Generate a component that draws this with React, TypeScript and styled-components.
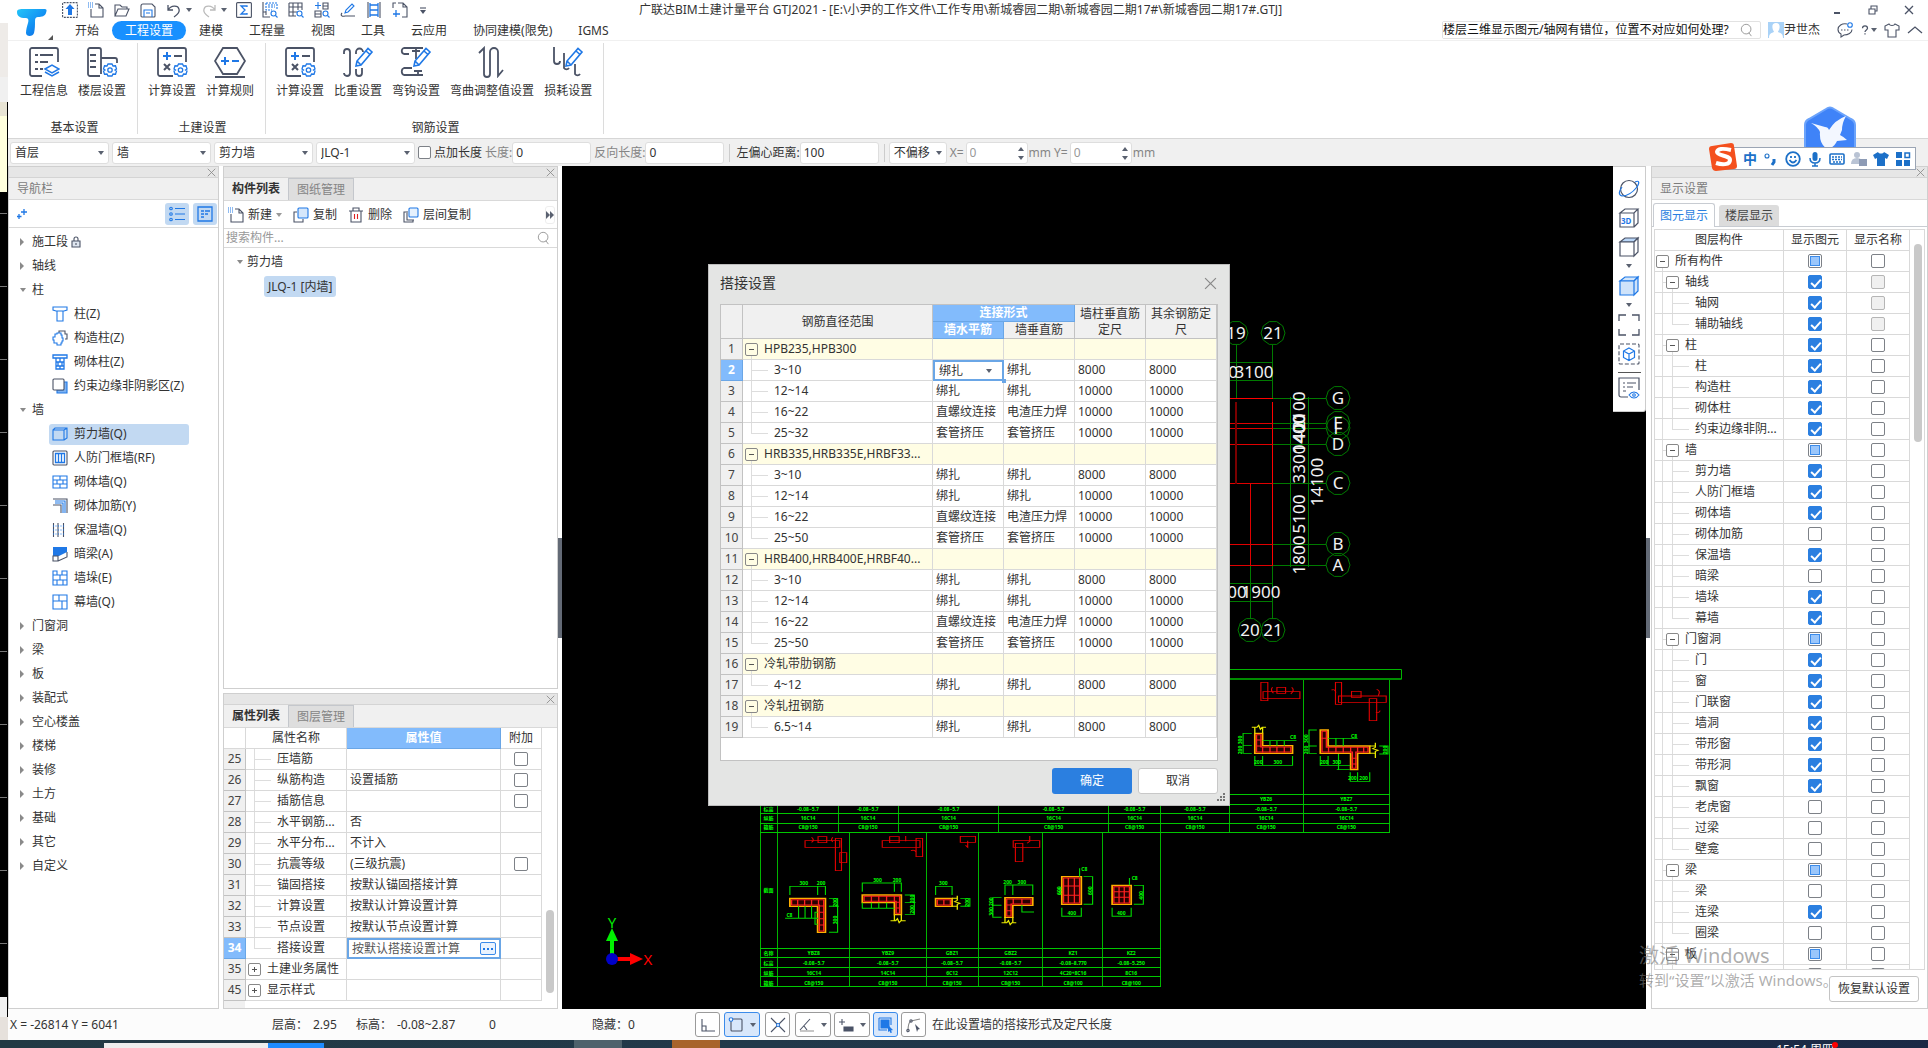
import React, { useEffect, useRef } from "react";
import styled, { createGlobalStyle, css } from "styled-components";

const INK = "#4b5366";
const BLUE = "#1f78e6";
const LINE = "#d9d9d9";

const GlobalStyle = createGlobalStyle`
  * { box-sizing: border-box; }
  html, body { margin: 0; padding: 0; height: 100%; overflow: hidden; }
  body, button, input, select {
    font-family: "Noto Sans", "Noto Sans CJK SC", sans-serif;
    font-size: 12px;
    line-height: 18px;
    color: #333;
  }
  button { margin: 0; padding: 0; border: 0; background: none; }
  svg { display: block; flex: none; }
  h1, h2, p, ul { margin: 0; padding: 0; font-weight: normal; list-style: none; font-size: 12px; }
`;

/* ---------- icons ---------- */

type IconProps = { size?: number; box?: number; children?: React.ReactNode };
const Icon = ({ size = 16, box = 16, children }: IconProps) => (
  <svg width={size} height={size} viewBox={`0 0 ${box} ${box}`} fill="none" stroke={INK} strokeWidth={1.1} aria-hidden="true">
    {children}
  </svg>
);

const Gear = ({ x, y }: { x: number; y: number }) => (
  <g stroke={BLUE} strokeWidth="1.3" transform={`translate(${x} ${y})`}>
    <path d="M-2-6h4l1 2 2.500-.2 1 3.200-1.500 1 1.500 1-1 3.200L3 4l-1 2h-4l-1-2-2.500.2-1-3.200L-5 0l-1.500-1 1-3.200L-3-4z" />
    <circle r="2.200" />
  </g>
);
const Pencil = () => (
  <path stroke={BLUE} strokeWidth="1.6" d="M14 20l1-5L26 2.500l4 3.500L19 19zM24 5l4 3.500M15 15l4 4" />
);
const Calc = () => (
  <Icon size={32} box={32}>
    <path strokeWidth="1.800" d="M17 30H4a2 2 0 0 1-2-2V4a2 2 0 0 1 2-2h24a2 2 0 0 1 2 2v12" />
    <path stroke={BLUE} strokeWidth="2" d="M7 10h8M11 6v8" />
    <path strokeWidth="2" d="M18 10h8M8 18l6 6M14 18l-6 6" />
    <Gear x={24.500} y={24} />
  </Icon>
);

const ribbonIcons: Record<string, React.ReactNode> = {
  info: (
    <Icon size={32} box={32}>
      <path strokeWidth="1.800" d="M14 30H4a2 2 0 0 1-2-2V4a2 2 0 0 1 2-2h24a2 2 0 0 1 2 2v12" />
      <path strokeWidth="1.800" d="M7 9h3M12 9h13M7 16h3M12 16h8M7 23h3M12 23h3" />
      <path stroke={BLUE} strokeWidth="1.500" d="M17 23l7-4 7 4-7 4zM17 26l7 4 7-4" />
    </Icon>
  ),
  floor: (
    <Icon size={32} box={32}>
      <path strokeWidth="1.800" d="M14 30H4a2 2 0 0 1-2-2V4a2 2 0 0 1 2-2h9a2 2 0 0 1 2 2v24M4 9h6M4 15h6M4 21h6M15 12h14a2 2 0 0 1 2 2v3" />
      <Gear x={24} y={24} />
    </Icon>
  ),
  calc: <Calc />,
  rule: (
    <Icon size={32} box={32}>
      <path strokeWidth="1.800" d="M9 2h14l8 13-8 13H9L1 15zM1 31h30" />
      <path stroke={BLUE} strokeWidth="2" d="M7 15h8M11 11v8M18 15h7" />
    </Icon>
  ),
  weight: (
    <Icon size={32} box={32}>
      <path strokeWidth="1.800" d="M2 8V6a3 3 0 0 1 6 0v21a3 3 0 0 1-6 0M14 8V6a3 3 0 0 1 7 0M14 23v4a3 3 0 0 0 6 0v-5" />
      <Pencil />
    </Icon>
  ),
  hook: (
    <Icon size={32} box={32}>
      <path strokeWidth="1.800" d="M23 2H4c-3 1-3 5 0 6h5M12 5h8M16 2v11M12 22h-8c-3 1-3 6 0 7h19M14 25h8M18 24v5" />
      <Pencil />
    </Icon>
  ),
  bend: (
    <Icon size={32} box={32}>
      <path strokeWidth="1.800" d="M3 7l5-5v26a3 3 0 0 0 6 0V6a4 4 0 0 1 8 0v24l5-6" />
    </Icon>
  ),
  loss: (
    <Icon size={32} box={32}>
      <path strokeWidth="1.800" d="M2 1v14a3 3 0 0 0 6 0M12 7v15a3 3 0 0 0 5 0M23 18v10a3 3 0 0 0 5 0" />
      <Pencil />
    </Icon>
  ),
};

const quickIcons: Record<string, React.ReactNode> = {
  up: <Icon><rect x=".6" y=".6" width="14.800" height="14.800" rx="1" strokeDasharray="2 1" /><path fill={BLUE} stroke="none" d="M8 2l4.500 5H10v6H6V7H3.500z" /></Icon>,
  new: <Icon><path d="M7 2h4l4 4v9H3V7M11 2v4h4" /><path stroke={BLUE} strokeDasharray="1 1" d="M0 1h5M0 3h5M0 5h5" /></Icon>,
  open: <Icon><path d="M1 14V3h5l2 2h5v2M1 14h11l3-7H4z" /></Icon>,
  save: <Icon><path d="M3 2h9l3 3v9a1 1 0 0 1-1 1H2a1 1 0 0 1-1-1V4a2 2 0 0 1 2-2z" /><path stroke={BLUE} d="M4 15V8h8v7M6 11h4" /></Icon>,
  undo: <Icon><path strokeWidth="1.300" d="M2 3v5h5M2 8c3-5 10-5 11-1 1 3-2 6-5 8" /></Icon>,
  redo: <Icon><path stroke="#bbb" strokeWidth="1.300" d="M14 3v5H9M14 8C11 3 4 3 3 7c-1 3 2 6 5 8" /></Icon>,
  sum: <Icon><rect x=".600" y=".600" width="14.800" height="14.800" rx="1" /><path stroke={BLUE} strokeWidth="1.300" d="M11 5V4H5l4 4-4 4h6v-1" /></Icon>,
  view: <Icon><path d="M1 0v15h7M4 10H1M4 13V9" /><path stroke={BLUE} d="M4 1h11v7M4 1v7h6M6 3h7M6 5h7" strokeDasharray="2 1" /><circle cx="11.500" cy="11.500" r="2.500" stroke={BLUE} /><path stroke={BLUE} d="M13.500 13.500l2 2" /></Icon>,
  grid: <Icon><path d="M1 1h13v7M1 1v13h7M1 5h13M1 10h8M5 1v13M10 1v7" /><circle cx="11.500" cy="11.500" r="2.500" stroke={BLUE} /><path stroke={BLUE} d="M13.500 13.500l2 2" /></Icon>,
  comp: <Icon><path d="M9 1h5v6H9zM1 9h6v6H1zM1 12h6M9 4h5" /><path stroke={BLUE} d="M4 0v7M1 3.500h6" /><circle cx="11.500" cy="11.500" r="2.500" stroke={BLUE} /><path stroke={BLUE} d="M13.500 13.500l2 2" /></Icon>,
  edit: <Icon><path d="M2 11c-2 2 0 4 3 3h10" /><path stroke={BLUE} d="M5 11l1-3 6-6 2 2-6 6z" /></Icon>,
  film: <Icon><path d="M2 0v16M14 0v16" /><path stroke={BLUE} strokeWidth="1.300" d="M4 1v14M12 1v14M4 3h8M4 8h8M4 13h8" /></Icon>,
  page: <Icon><path d="M6 1h5l4 4v10h-5M11 1v4h4M1 6V1h3" /><path stroke={BLUE} strokeWidth="1.300" d="M4 8v7M1 12h7" /></Icon>,
};

const navIcons: Record<string, React.ReactNode> = {
  column: <Icon><path stroke={BLUE} d="M1 1h14v3l-3 1H4L1 4zM5 5v10h6V5" /></Icon>,
  structural: <Icon><path d="M7 3V1h6v3h2v5h-2" /><path stroke={BLUE} d="M3 4h2V3h4v2h1v3h1v3h-1v2H9v2H5v-2H2v-3H1V7h2z" /></Icon>,
  masonryColumn: <Icon><path stroke={BLUE} strokeWidth="1.300" d="M1 1h14v3H1zM4 4v11h8V4M4 8h8M4 12h8M8 4v4M8 12v3M10 8v4M6 8v4" /></Icon>,
  edge: <Icon><path fill="#7db2f2" stroke={BLUE} d="M5 12h6V4h4v11H5z" /><rect x="1" y="1" width="11" height="11" rx="1" fill="#fff" /></Icon>,
  wall: <Icon><path stroke={BLUE} d="M1 4h11v10H1zM1 4l2-2h12v10l-3 2M12 4l3-2" /></Icon>,
  frame: <Icon><rect x="1" y="1" width="14" height="14" rx="1" /><path stroke={BLUE} strokeWidth="1.300" d="M3.500 3.500h9v9h-9zM6.500 3.500v9M9.500 3.500v9" /></Icon>,
  brick: <Icon><path stroke={BLUE} d="M1 2h14v12H1zM1 6h14M1 10h14M8 2v4M5 6v4M11 6v4M8 10v4" /></Icon>,
  rebar: <Icon><path d="M1 1h14v14M1 7h8v8" /><path stroke={BLUE} d="M3 3h10v12M3 5h8v10" /></Icon>,
  insul: <Icon><path d="M1.500 1v14M6 1v14M11.500 1v14" /><path stroke={BLUE} strokeDasharray="1 1.500" d="M1 4h11M1 8h11M1 12h11" /></Icon>,
  beam: <Icon><path fill={BLUE} stroke="none" d="M1 1h14v5l-8 4H1z" /><path d="M1 10h5v5H1zM6 15l9-4V6" /></Icon>,
  pier: <Icon><path stroke={BLUE} d="M1 1h4v4h5V1h5v14H1zM1 5h14M1 10h14M8 5v5M5 10v5M11 10v5" /></Icon>,
  curtain: <Icon><path stroke={BLUE} d="M1 1h14v14H1zM1 7h14M7 1v6M10 7v8" /></Icon>,
};

const cubeIcon = (top: string, front: string, stroke = INK) => (
  <Icon size={22} box={22}>
    <path stroke={stroke} fill={top} strokeWidth="1.200" d="M2 6l5-4h13l-4 4z" />
    <path stroke={stroke} fill={front} strokeWidth="1.200" d="M2 6h14v14H2zM16 6l4-4v14l-4 4z" />
  </Icon>
);

const Search = () => (
  <Icon size={14}><circle cx="7" cy="7" r="5.500" stroke="#999" /><path stroke="#999" d="M10 11l3 4" /></Icon>
);

const Cross = ({ size = 11 }: { size?: number }) => (
  <Icon size={size} box={12}><path stroke="#888" strokeWidth="1.100" d="M1 1l10 10M11 1L1 11" /></Icon>
);

/* ---------- generic parts ---------- */

const Caret = styled.i<{ $dir?: "down" | "right" | "up"; $color?: string }>`
  width: 0; height: 0; flex: none;
  ${({ $dir = "down", $color = "#5a6170" }) =>
    $dir === "down"
      ? css`border: 3px solid transparent; border-top: 4px solid ${$color}; border-bottom: 0;`
      : $dir === "up"
        ? css`border: 3px solid transparent; border-bottom: 4px solid ${$color}; border-top: 0;`
        : css`border: 4px solid transparent; border-left: 4px solid ${$color}; border-right: 0;`}
`;

const CheckInput = styled.input<{ $mixed?: boolean; $size: number }>`
  appearance: none;
  display: block; flex: none;
  width: ${p => p.$size}px; height: ${p => p.$size}px;
  margin: 0 auto;
  border: 1px solid #7d8187; border-radius: 2px; background: #fff;
  position: relative;
  &:disabled { background: #f0f0f0; border-color: #b5b5b5; }
  &:checked { background: #2b7fe0; border-color: #2b7fe0; }
  &:checked::after {
    content: ""; position: absolute; left: 4px; top: 1px; width: 4px; height: 8px;
    border: solid #fff; border-width: 0 2px 2px 0; transform: rotate(42deg);
  }
  ${p => p.$mixed && css`
    &::after { content: ""; position: absolute; inset: 1px; background: #9ac6fb; border: 1px solid #3b8bea; }
  `}
`;

const Check = ({ state = 0, label, size = 14, id }: { state?: number; label?: string; size?: number; id?: string }) => {
  const ref = useRef<HTMLInputElement>(null);
  useEffect(() => { if (ref.current) ref.current.indeterminate = state === 2; }, [state]);
  return <CheckInput ref={ref} id={id} type="checkbox" aria-label={label} defaultChecked={state === 1} disabled={state === 3} $mixed={state === 2} $size={size} />;
};

const Expander = styled.button<{ $tail?: boolean }>`
  width: 13px; height: 13px; flex: none; position: relative;
  border: 1px solid #888; border-radius: 2px; background: transparent;
  &::before { content: ""; position: absolute; left: 3px; top: 5px; width: 5px; height: 1px; background: #555; }
  ${p => p.$tail ? css`&::after { content: ""; position: absolute; left: 5px; top: 12px; width: 1px; height: 4px; background: #ddd; }`
    : css`&::after { content: ""; position: absolute; left: 5px; top: 3px; width: 1px; height: 5px; background: #555; }`}
`;

const Guide = styled.span<{ $w: number; $end?: boolean; $arm?: boolean }>`
  width: ${p => p.$w}px; align-self: stretch; flex: none;
  background: linear-gradient(#ddd, #ddd) 0 0 / 1px ${p => (p.$end ? "50%" : "100%")} no-repeat
    ${p => p.$arm && ", linear-gradient(#ddd, #ddd) 0 50% / 100% 1px no-repeat"};
`;

const NameCell = styled.div<{ $pad: number }>`
  display: flex; align-items: center; height: 20px; padding-left: ${p => p.$pad}px;
  white-space: nowrap; overflow: hidden;
  > span:last-child { margin-left: 6px; }
`;

const Grid = styled.table`
  width: 100%; table-layout: fixed; border-collapse: separate; border-spacing: 0;
  th, td {
    height: 21px; padding: 0; font-weight: normal; line-height: 18px; white-space: nowrap;
    border-right: 1px solid ${LINE}; border-bottom: 1px solid ${LINE};
  }
`;

const Panel = styled.section`
  display: flex; flex-direction: column; min-height: 0;
  background: #fff; border: 1px solid #cfcfcf;
`;
const Strip = styled.div`
  display: flex; justify-content: flex-end; align-items: center;
  height: 11px; flex: none; padding-right: 2px; background: #e6e6e6; border-bottom: 1px solid #d4d4d4;
`;
const StripClose = styled.button`display: flex;`;
const PanelTitle = styled.h2`
  height: 22px; flex: none; padding-left: 8px; line-height: 22px; color: #7c7c7c;
  background: #f0f0f0; border-bottom: 1px solid ${LINE};
`;

const PanelTop = () => <Strip><StripClose aria-label="关闭"><Cross size={9} /></StripClose></Strip>;

/* ---------- frame ---------- */

const Desktop = styled.div`
  display: flex; flex-direction: column; height: 100vh; position: relative; overflow: hidden; background: #fff;
`;
const Work = styled.div`display: flex; flex: 1; min-height: 0;`;
const Behind = styled.div`width: 8px; flex: none; display: flex; flex-direction: column;`;
const BehindPart = styled.div<{ $h?: number; $bg: string; $edge?: boolean }>`
  ${p => (p.$h ? `height: ${p.$h}px; flex: none;` : "flex: 1;")} background: ${p => p.$bg};
  ${p => p.$edge && "border-right: 1px solid #000;"}
`;
const AppWindow = styled.div`flex: 1; min-width: 0; display: flex; flex-direction: column; background: #fff;`;

const Header = styled.header`
  display: flex; height: 41px; flex: none; border-bottom: 1px solid #f0f0f0;
`;
const LogoBox = styled.div`width: 54px; padding: 3px 0 0 8px; display: flex; align-items: flex-end; flex: none;`;
const HeadRows = styled.div`flex: 1; min-width: 0; display: flex; flex-direction: column;`;
const TitleRow = styled.div`display: flex; height: 21px; align-items: center;`;
const QuickBar = styled.div`display: flex; align-items: center; width: 577px; flex: none;`;
const QuickBtn = styled.button<{ $w: number }>`display: flex; align-items: center; gap: 4px; width: ${p => p.$w}px; flex: none;`;
const Title = styled.h1`flex: 1; white-space: nowrap;`;
const WinButtons = styled.div`display: flex; align-items: center; gap: 26px; padding-right: 14px; button { display: flex; }`;
const TabRow = styled.div`display: flex; height: 20px; align-items: center;`;
const Tabs = styled.nav`display: flex; flex: 1;`;
const Tab = styled.button<{ $on?: boolean }>`
  height: 19px; padding: 0 13px; line-height: 19px; white-space: nowrap; border-radius: 10px;
  ${p => p.$on && css`background: #1890ff; color: #fff;`}
`;
const HelpSearch = styled.label`
  display: flex; align-items: center; width: 319px; height: 18px; padding-right: 6px; border: 1px solid #e2e2e2; border-radius: 2px;
  input { flex: 1; min-width: 0; border: 0; padding: 0; outline: 0; height: 16px; color: #111; }
`;
const User = styled.button`display: flex; align-items: center; margin: 0 17px 0 7px;`;
const Tools = styled.div`display: flex; align-items: center; gap: 7px; padding-right: 5px; button { display: flex; align-items: center; gap: 1px; }`;

const Ribbon = styled.div`display: flex; height: 98px; flex: none; padding: 2px 0 4px 1px; border-bottom: 1px solid #d6d6d6;`;
const Group = styled.section`
  display: flex; flex-direction: column; justify-content: space-between; padding: 3px 6px 0 6px; border-right: 1px solid #dcdcdc;
  & + & { padding-left: 5px; }
  h2 { padding-left: 3px; text-align: center; line-height: 13px; }
`;
const GroupItems = styled.div`display: flex;`;
const Big = styled.button`
  display: flex; flex-direction: column; align-items: center; gap: 4px; padding: 0 5px; white-space: nowrap;
`;

const OptionBar = styled.div`display: flex; align-items: center; height: 27px; flex: none; padding-left: 2px; background: #f0f0f0; white-space: nowrap;`;
const SelectBox = styled.span<{ $w: number }>`
  position: relative; width: ${p => p.$w}px; margin-right: 3px; flex: none;
  select { appearance: none; display: block; width: 100%; height: 22px; padding: 0 4px; border: 1px solid #dedede; border-radius: 3px; background: #fff; outline: 0; }
  i { position: absolute; right: 5px; top: 9px; }
`;
const OptLabel = styled.label<{ $dim?: boolean; $gap?: number }>`
  color: ${p => (p.$dim ? "#858585" : "#333")}; margin-left: ${p => p.$gap ?? 3}px;
`;
const OptInput = styled.input<{ $w: number; $dim?: boolean }>`
  width: ${p => p.$w}px; height: 22px; padding: 0 3px; flex: none; color: ${p => (p.$dim ? "#999" : "#333")};
  border: 1px solid #dedede; border-radius: 3px; background: #fff; outline: 0;
`;
const Divider = styled.i`width: 1px; height: 18px; margin: 0 3px 0 5px; background: #ccc;`;
const Spin = styled.span`
  position: relative; display: flex; margin: 0 1px 0 2px;
  span { position: absolute; right: 4px; top: 5px; display: flex; flex-direction: column; gap: 5px; }
`;

const Body = styled.div`display: flex; flex: 1; min-height: 0;`;
const Splitter = styled.div<{ $w: number }>`
  width: ${p => p.$w}px; flex: none; display: flex; align-items: center;
  &::before { content: ""; width: 4px; height: 100px; background: #636a76; }
`;

/* ---------- navigation ---------- */

const NavPanel = styled(Panel)`width: 211px; flex: none; margin-right: 4px;`;
const NavTools = styled.div`
  display: flex; align-items: center; gap: 4px; height: 28px; flex: none; padding: 0 1px 0 8px; border-bottom: 1px solid ${LINE};
`;
const Toggle = styled.button`display: flex; align-items: center; justify-content: center; width: 24px; height: 22px; border-radius: 3px; background: #c2d9f2;`;
const Spacer = styled.span`flex: 1;`;
const NavTree = styled.ul`padding-top: 2px;`;
const NavRow = styled.li`
  height: 24px; display: flex; align-items: center; padding-left: 11px;
`;
const NavHead = styled.button`display: flex; align-items: center; svg { margin-left: 2px; }`;
const CaretSlot = styled.span`width: 12px; display: flex; justify-content: flex-start;`;
const NavLeaf = styled.button<{ $on?: boolean }>`
  display: flex; align-items: center; gap: 6px; width: 140px; height: 21px; margin-left: 29px; padding-left: 3px; white-space: nowrap; border-radius: 3px;
  background: ${p => (p.$on ? "#c2d9f2" : "transparent")};
`;

type Nav = { t: string; open?: boolean; lock?: boolean; kids?: [string, string][] };
const navData: Nav[] = [
  { t: "施工段", lock: true },
  { t: "轴线" },
  { t: "柱", open: true, kids: [["column", "柱(Z)"], ["structural", "构造柱(Z)"], ["masonryColumn", "砌体柱(Z)"], ["edge", "约束边缘非阴影区(Z)"]] },
  { t: "墙", open: true, kids: [["wall", "剪力墙(Q)"], ["frame", "人防门框墙(RF)"], ["brick", "砌体墙(Q)"], ["rebar", "砌体加筋(Y)"], ["insul", "保温墙(Q)"], ["beam", "暗梁(A)"], ["pier", "墙垛(E)"], ["curtain", "幕墙(Q)"]] },
  { t: "门窗洞" }, { t: "梁" }, { t: "板" }, { t: "装配式" }, { t: "空心楼盖" }, { t: "楼梯" },
  { t: "装修" }, { t: "土方" }, { t: "基础" }, { t: "其它" }, { t: "自定义" },
];

const Navigator = () => (
  <NavPanel>
    <PanelTop />
    <PanelTitle>导航栏</PanelTitle>
    <NavTools>
      <Icon size={10} box={10}><path stroke={BLUE} strokeWidth="1.300" d="M7 0v6M4 3h6M2 5v5M0 7.500h4.500" /></Icon>
      <Spacer />
      <Toggle aria-label="列表"><Icon><g stroke={BLUE}><circle cx="2" cy="2.500" r="1.300" /><circle cx="2" cy="8" r="1.300" /><circle cx="2" cy="13.500" r="1.300" /><path d="M6 2.500h10M6 8h10M6 13.500h10" /></g></Icon></Toggle>
      <Toggle aria-label="详情"><Icon><path stroke={BLUE} strokeWidth="1.300" d="M1 1h14v14H1zM4 5h3M8 5h5M4 8h3M8 8h3M4 11h3" /></Icon></Toggle>
    </NavTools>
    <NavTree>
      {navData.map(n => (
        <React.Fragment key={n.t}>
          <NavRow>
            <NavHead>
              <CaretSlot><Caret $dir={n.open ? "down" : "right"} $color="#8a8a8a" /></CaretSlot>
              <span>{n.t}</span>
              {n.lock && <Icon size={12} box={12}><path fill="#dfe6f0" d="M2 5h8v6H2z" /><path d="M4 5V3a2 2 0 0 1 4 0v2M6 7v2" /></Icon>}
            </NavHead>
          </NavRow>
          {n.kids?.map(([ic, t]) => (
            <NavRow key={t}><NavLeaf $on={ic === "wall"}>{navIcons[ic]}{t}</NavLeaf></NavRow>
          ))}
        </React.Fragment>
      ))}
    </NavTree>
  </NavPanel>
);

/* ---------- component and property panels ---------- */

const Middle = styled.div`width: 335px; flex: none; display: flex; flex-direction: column; gap: 4px;`;
const ListPanel = styled(Panel)`flex: 1;`;
const PropPanel = styled(Panel)`height: 316px; flex: none;`;
const FileTabs = styled.div`display: flex; height: 23px; flex: none; background: #f0f0f0; border-bottom: 1px solid ${LINE};`;
const FileTab = styled.button<{ $on?: boolean }>`
  padding: 0 8px; line-height: 22px; border-right: 1px solid #c4c7cc;
  ${p => (p.$on ? css`font-weight: bold; background: #f0f0f0;` : css`background: #dedede; color: #858585; border-top: 1px solid #c4c7cc;`)}
`;
const Commands = styled.div`display: flex; align-items: center; height: 28px; flex: none; padding: 0 2px 0 4px; border-bottom: 1px solid ${LINE};`;
const Command = styled.button`display: flex; align-items: center; gap: 4px; margin-right: 11px; white-space: nowrap;`;
const More = styled.button`display: flex; align-items: center; justify-content: center; width: 10px; height: 18px; border: 1px solid #eee; border-radius: 3px;`;
const FindRow = styled.label`
  display: flex; align-items: center; height: 19px; flex: none; padding: 0 6px 0 2px; border-bottom: 1px solid ${LINE};
  input { flex: 1; border: 0; padding: 0; outline: 0; height: 17px; &::placeholder { color: #999; } }
`;
const ListTree = styled.div`padding: 3px 0 0 13px; display: flex; flex-direction: column; align-items: flex-start; gap: 3px;`;
const ListRoot = styled.button`display: flex; align-items: center; gap: 4px; height: 22px;`;
const ListItem = styled.button`height: 21px; margin-left: 27px; padding: 0 4px; border-radius: 3px; background: #c2d9f2;`;

const Scroller = styled.div`display: flex; flex: 1; min-height: 0; overflow: hidden;`;
const PropGridBox = styled.div`width: 318px; flex: none; background: linear-gradient(90deg, #f0f0f0 21px, #fff 21px);`;
const Thumb = styled.div<{ $top: number; $h: number }>`
  width: 8px; height: ${p => p.$h}px; margin: ${p => p.$top}px 0 0 4px; border-radius: 4px; background: #c9c9c9;
`;
const NumCell = styled.td<{ $on?: boolean }>`
  && { text-align: center; background: ${p => (p.$on ? "#82bbfc" : "#f0f0f0")}; color: ${p => (p.$on ? "#fff" : "#444")};
    font-weight: ${p => (p.$on ? "bold" : "normal")}; border-color: ${p => (p.$on ? "#6aa6e6" : "#c2c2c2")}; }
`;
const BlueHead = styled.th`&& { background: #82bbfc; color: #fff; font-weight: bold; border-color: #6aa6e6; line-height: 16px; }`;
const PlainHead = styled.th`&& { background: #fff; }`;
const ValCell = styled.td`&& { padding-left: 3px; }`;
const ActiveVal = styled.td`
  && { border: 2px solid #6aa6e6; color: #555; }
  > div { display: flex; align-items: center; height: 17px; padding: 0 3px; }
  input { flex: 1; min-width: 0; border: 0; padding: 0; height: 16px; outline: 0; color: #555; }
`;
const Dots = styled.button`
  width: 16px; height: 13px; border: 1px solid #3b8bea; border-radius: 2px; background: #eaf3fe;
  display: flex; align-items: center; justify-content: center;
`;

const props: [string, string, string, number][] = [
  ["25", "压墙筋", "", 1], ["26", "纵筋构造", "设置插筋", 1], ["27", "插筋信息", "", 1], ["28", "水平钢筋...", "否", 0],
  ["29", "水平分布...", "不计入", 0], ["30", "抗震等级", "(三级抗震)", 1], ["31", "锚固搭接", "按默认锚固搭接计算", 0],
  ["32", "计算设置", "按默认计算设置计算", 0], ["33", "节点设置", "按默认节点设置计算", 0], ["34", "搭接设置", "按默认搭接设置计算", 0],
  ["35", "土建业务属性", "", 0], ["45", "显示样式", "", 0],
];

const Components = () => (
  <Middle>
    <ListPanel>
      <PanelTop />
      <FileTabs><FileTab $on>构件列表</FileTab><FileTab>图纸管理</FileTab></FileTabs>
      <Commands>
        <Command>{quickIcons.new}新建<Caret $color="#999" /></Command>
        <Command><Icon><path d="M4 5H1v10h9v-3" /><rect x="5" y="1" width="10" height="10" rx="1" fill="#d6e7fb" stroke={BLUE} /></Icon>复制</Command>
        <Command><Icon><path d="M1 4h14M5 4V1h6v3M3 4v11h10V4" /><path stroke="#e02020" d="M6.500 7v5M9.500 7v5" /></Icon>删除</Command>
        <Command><Icon><path d="M3 5H1v10h9v-2M4 4v9h7" /><rect x="6" y="1" width="9" height="9" rx="1" fill="#e6f1fd" stroke={BLUE} /></Icon>层间复制</Command>
        <Spacer />
        <More aria-label="更多"><Caret $dir="right" /><Caret $dir="right" /></More>
      </Commands>
      <FindRow><input aria-label="搜索构件" placeholder="搜索构件..." /><Search /></FindRow>
      <ListTree>
        <ListRoot><Caret $color="#8a8a8a" />剪力墙</ListRoot>
        <ListItem>JLQ-1 [内墙]</ListItem>
      </ListTree>
    </ListPanel>
    <PropPanel>
      <PanelTop />
      <FileTabs><FileTab $on>属性列表</FileTab><FileTab>图层管理</FileTab></FileTabs>
      <Scroller>
        <PropGridBox>
          <Grid>
            <colgroup><col style={{ width: 22 }} /><col style={{ width: 101 }} /><col style={{ width: 154 }} /><col /></colgroup>
            <thead><tr><PlainHead /><PlainHead>属性名称</PlainHead><BlueHead>属性值</BlueHead><PlainHead>附加</PlainHead></tr></thead>
            <tbody>
              {props.map(([n, name, val, box]) => {
                const group = n === "35" || n === "45";
                return (
                  <tr key={n}>
                    <NumCell $on={n === "34"}>{n}</NumCell>
                    <td>
                      <NameCell $pad={group ? 2 : 8}>
                        {group ? <Expander aria-label={name} /> : <Guide $w={17} $arm $end={n === "34"} />}
                        <span>{name}</span>
                      </NameCell>
                    </td>
                    {n === "34" ? (
                      <ActiveVal><div><input aria-label={name} defaultValue={val} /><Dots aria-label="更多"><Icon size={10} box={10}><path stroke={BLUE} strokeWidth="2" strokeDasharray="2 2" d="M0 5h10" /></Icon></Dots></div></ActiveVal>
                    ) : <ValCell>{val}</ValCell>}
                    <td>{box === 1 && <Check label={name} />}</td>
                  </tr>
                );
              })}
            </tbody>
          </Grid>
        </PropGridBox>
        <Thumb $top={182} $h={83} />
      </Scroller>
    </PropPanel>
  </Middle>
);

/* ---------- drawing ---------- */

const Viewport = styled.main`flex: 1; min-width: 0; position: relative; overflow: hidden; background: #000;`;

const G = "#00e000";
const Dim = ({ d }: { d: string }) => <path d={d} stroke="#00d800" />;

const Drawing = () => {
  const sx = (x: number) => 740 + x * 0.4337;
  const sy = (y: number) => 650 + y / 3;
  const axes: [string, number, number][] = [
    ["19", 1236, 333], ["21", 1273, 333], ["G", 1338, 398], ["E", 1338, 423], ["F", 1338, 428], ["D", 1338, 444],
    ["C", 1338, 483], ["B", 1338, 544], ["A", 1338, 565], ["20", 1250, 630], ["21", 1273, 630],
  ];
  const sideText: [string, number, number][] = [["2100", 1299, 411], ["400", 1299, 428], ["1400", 1299, 434], ["3300", 1299, 464], ["5100", 1299, 514], ["1800", 1299, 555], ["14100", 1317, 482]];
  const cols = [66, 170, 341, 489, 624, 768, 902];
  const rows: string[][] = [
    ["名称", "YBZ8", "YBZ9", "GBZ1", "GBZ2", "KZ1", "KZ2"],
    ["标高", "-0.08~5.7", "-0.08~5.7", "-0.08~5.7", "-0.08~5.7", "-0.08~8.770", "-0.08~5.250"],
    ["纵筋", "16C14", "14C14", "6C12", "12C12", "4C20+8C16", "8C16"],
    ["箍筋", "C8@150", "C8@150", "C8@150", "C8@150", "C8@100", "C8@100"],
  ];
  const upperCols = [66, 157, 295, 481, 723, 910, 1049, 1213, 1398];
  return (
    <svg width="1084" height="843" viewBox="562 166 1084 843" fill="none" stroke={G} strokeWidth="1" fontFamily='"Noto Sans", "Noto Sans CJK SC", sans-serif'>
      <g stroke="#007a00">
        <path d="M1236.500 345v53M1272.500 345v53M1230 362.500h43M1230 380.500h43M1272 398.500h54M1272 423.500h54M1272 428.500h54M1272 444.500h54M1272 483.500h54M1272 544.500h54M1272 565.500h54" />
        <path d="M1290.500 397v170M1308.500 397v170M1250.500 566v53M1272.500 566v53M1230 583.500h43M1230 601.500h43" />
        {axes.map(([t, x, y], i) => (
          <polygon key={t + i} points={Array.from({ length: 10 }, (_, k) => `${x + 12 * Math.cos(k * Math.PI / 5)},${y + 12 * Math.sin(k * Math.PI / 5)}`).join(" ")} />
        ))}
      </g>
      <path stroke="#ff0000" d="M1230 398.500h43M1272.500 402v164" />
      <path stroke="#e00000" d="M1230 423.500h43M1230 428.500h43M1230 444.500h43M1230 483.500h43M1230 544.500h43M1230 565.500h43M1250.500 484v82" />
      <path stroke="#7a0000" strokeWidth="2" d="M1236 402v82" />
      <g fill="#f2f2f2" stroke="none" fontSize="17" textAnchor="middle">
        {axes.map(([t, x, y], i) => <text key={i} x={x} y={y + 6}>{t}</text>)}
        <text x="1233" y="378">0</text>
        <text x="1254" y="378">3100</text>
        <text x="1237" y="598">00</text>
        <text x="1261" y="598">1900</text>
        {sideText.map(([t, x, y]) => <text key={t} transform={`translate(${x + 6} ${y}) rotate(-90)`}>{t}</text>)}
      </g>

      {/* column schedule frames */}
      <path stroke="#00b400" d="M1200 669.500h201.500v10M777.500 794v192M760.500 794v192M838.500 804v28M898.500 804v28M998.500 804v28M1108.500 804v28M1160.500 804v182M1229.500 794v38M1303.500 679v153M1389.500 679v153M849.500 832v154M926.500 832v154M978.500 832v154M1042.500 832v154M1102.500 832v154" />
      <path stroke="#008c00" strokeWidth="2" d="M1200 679h201" />
      <path stroke="#00c800" d="M760 794.500h630M760 804.500h630M760 813.500h630M760 823.500h630M760 832.500h630M760 948.500h401M760 957.500h401M760 967.500h401M760 976.500h401M760 986.500h401" />

      <g transform="translate(740 650) scale(0.4337 0.3333)">
        <g stroke="#e00000" strokeWidth="2.600">
          <path d="M150 572h80v20h-80zM180 560h20v18h-20zM220 565h14v97h-14zM230 608h16v30h-16zM165 562q8 8 0 15M214 562q-6 8 0 14" />
          <path d="M328 572h87v20h-87zM345 560h22v18h-22zM406 565h15v55h-15zM394 602q8-4 12 4M382 558v16" />
          <path d="M508 559h35v18h-35zM525 572v20l-5-6M630 572h61v20h-61zM635 580h17v55h-17zM668 558v16l-6 6" />
          <path d="M1201 97h16v55h-16zM1206 125h85v21h-85zM1238 112h20v18h-20zM1272 112q8 8-2 20M1228 112q-6 8 2 18" />
          <path d="M1373 97h14v66h-14zM1380 138h110v19h-110zM1410 124h22v18h-22zM1451 146h17v66h-17zM1364 120q8-4 10 8M1476 182q-2 8-10 6M1468 118q10 4 4 18" />
        </g>
        <g stroke="#ffb000" strokeWidth="4" fill="#2a0000">
          <path d="M115 745h82v102h-18v-78h-64z" />
          <path d="M282 735h90v59h-16v-36h-74z" />
          <path d="M451 745h38v24h-38z" />
          <path d="M611 743h64v23h-46v36h-18z" />
          <path d="M742 680h45v83h-45zM858 706h44v57h-44z" />
          <path d="M1187 250h18v37h69v23h-87z" />
          <path d="M1338 240h18v48h96v22h-28v49h-16v-49h-70z" />
        </g>
        <g stroke="#ff2020" strokeWidth="3">
          <path d="M119 749h74v94h-10v-78h-64zM133 749v18M149 749v18M165 749v18M181 749v18M181 768h14M181 787h14M181 806h14M181 825h14" />
          <path d="M286 739h82v51h-8v-36h-74zM303 739v17M320 739v17M338 739v17M356 739v17M358 757h12M358 774h12" />
          <path d="M455 749h30v16h-30zM470 749v16M615 747h56v15h-46v36h-10zM630 747v15M650 747v15M613 765h14M613 782h14" />
          <path d="M746 684h37v75h-37zM757 684v75M771 684v75M746 708h37M746 736h37M862 710h36v49h-36zM874 710v49M886 710v49M862 725h36M862 742h36" />
          <path d="M1191 254h10v37h69v15h-79zM1190 270h13M1190 288h13M1205 290v18M1222 290v18M1238 290v18M1255 290v18" />
          <path d="M1342 244h10v48h96v14h-28v49h-8v-49h-70zM1340 265h14M1357 290v18M1374 290v18M1391 290v18M1408 290v18M1424 290v18M1438 290v18M1410 325h12M1410 342h12" />
        </g>
        <g stroke="#e8e800" strokeWidth="3">
          <path d="M356 794v18M372 794v18M347 812h12l4-6 4 12 4-6h11M489 745h12M489 769h12M501 737v14l-6 4 12 5-6 3v16" />
          <path d="M611 802v16M629 802v16M603 818h12l4-6 4 12 4-6h10M1187 250v-18M1205 250v-18M1180 232h12l4-6 4 12 4-6h9M1452 288h13M1452 310h13M1465 278v14l-6 4 12 5-6 3v20" />
        </g>
        <g strokeWidth="2.600">
          <Dim d="M115 735v-26h82v26M179 735v-26M205 745h20v102h-20M205 769h23M104 805h76M135 769v36M150 769v36M165 769v36M179 787h-6v36h6" />
          <Dim d="M282 725v-26h90v26M356 725v-26M380 735h22v59h-22M380 758h25M282 758v17h74M303 758v17M320 758v17M338 758v17" />
          <Dim d="M451 735v-26h38v26M508 745h22v24h-22M611 735v-30h64v30M629 735v-30M603 743h-20v59h20M603 766h-22M650 766v20h28" />
          <Dim d="M792 680h21v83h-21M742 773v26h45v-26M783 655v25M908 706h22v57h-22M858 773v26h44v-26M898 684v22M738 710v24" />
          <Dim d="M1180 250h-20v60h20M1180 287h-20M1187 318v28h87v-28M1205 318v28M1205 272h78M1222 272v15M1238 272v15M1255 272v15" />
          <Dim d="M1330 240h-18v70h18M1330 288h-20M1338 318v28h69M1356 318v28M1356 265h68M1374 265v23M1391 265v23M1474 288h20v24h-20M1407 367v27h45v-27M1424 367v27M1376 359h30M1380 312v47" />
        </g>
      </g>
      <g fill="#00ff00" stroke="none" fontSize="5" fontWeight="bold" textAnchor="middle">
        {rows.map((r, ri) => r.map((t, ci) => <text key={`${ri}-${ci}`} x={sx(cols[ci])} y={955 + ri * 10}>{t}</text>))}
        {["-0.08~5.7", "16C14", "C8@150"].map((t, ri) => upperCols.map((c, ci) => (
          <text key={`u${ri}-${ci}`} x={sx(c)} y={811 + ri * 9}>{ci === 0 ? ["标高", "纵筋", "箍筋"][ri] : t}</text>
        )))}
        <text x={sx(66)} y="892">截面</text>
        <text x={sx(1213)} y="801">YBZ6</text>
        <text x={sx(1398)} y="801">YBZ7</text>
        {([["300", 147, 705], ["200", 187, 705], ["C8", 114, 800], ["300", 317, 695], ["200", 362, 695], ["300", 469, 706], ["200", 617, 702], ["300", 650, 702], ["C8", 794, 662], ["400", 765, 794], ["C8", 910, 690], ["400", 879, 794], ["C8", 1275, 268], ["200", 1195, 343], ["300", 1240, 343], ["C8", 1416, 264], ["200", 1347, 343], ["300", 1376, 343], ["200", 1412, 390], ["200", 1438, 390]] as [string, number, number][]).map(([t, x, y], i) => (
          <text key={`d${i}`} x={sx(x)} y={sy(y)}>{t}</text>
        ))}
        {([["200", 219, 757], ["300", 219, 810], ["200", 397, 747], ["200", 397, 778], ["200", 524, 757], ["200", 578, 755], ["300", 578, 784], ["600", 808, 722], ["600", 736, 722], ["400", 924, 736], ["300", 1154, 270], ["200", 1154, 300], ["300", 1306, 266], ["200", 1306, 300], ["200", 1488, 300]] as [string, number, number][]).map(([t, x, y], i) => (
          <text key={`r${i}`} transform={`translate(${sx(x) + 2} ${sy(y)}) rotate(-90)`}>{t}</text>
        ))}
      </g>

      {/* axis tripod */}
      <path stroke="#00f000" strokeWidth="4" d="M612 955v-18" />
      <path fill="#00f000" stroke="none" d="M606 941h12l-6-13z" />
      <path stroke="#ff0000" strokeWidth="4" d="M616 959h16" />
      <path fill="#ff0000" stroke="none" d="M630 953v12l13-6z" />
      <circle cx="612" cy="959" r="6" fill="#0000c8" stroke="none" />
      <g stroke="none" fontSize="15" textAnchor="middle"><text x="612" y="928" fill="#00f000">Y</text><text x="648" y="965" fill="#ff0000">X</text></g>
    </svg>
  );
};

const ViewBar = styled.div`
  position: absolute; top: 0; right: 0; width: 33px; height: 246px; padding-top: 11px;
  display: flex; flex-direction: column; align-items: center; background: #fff; border: 1px solid #ccc; border-left: 0; border-radius: 0 0 3px 0;
  button { display: flex; flex-direction: column; align-items: center; gap: 6px; margin-bottom: 7px; }
  hr { width: 23px; margin: 0 0 4px; border: 0; border-top: 1px solid #555; }
`;

const ViewTools = () => (
  <ViewBar>
    <button aria-label="动态观察"><Icon size={22} box={22}><circle cx="11" cy="11" r="8.500" strokeWidth="1.200" /><path stroke={BLUE} strokeWidth="1.200" d="M17 4c4-2 5 0 2 5-4 5-10 9-15 9-4-1-3-5 0-9" /></Icon></button>
    <button aria-label="三维">
      <Icon size={22} box={22}><path strokeWidth="1.200" d="M2 6l5-4h13l-4 4zM2 6v14h14V6M16 20l4-4V2" /><text x="3" y="17" fontSize="8" fontWeight="bold" fill={BLUE} stroke="none">3D</text></Icon>
    </button>
    <button aria-label="俯视">{cubeIcon("#b9d6f8", "#fff")}<Caret /></button>
    <button aria-label="着色">{cubeIcon("#d3e6fb", "#cfe3fa", BLUE)}<Caret /></button>
    <button aria-label="全屏"><Icon size={22} box={22}><path strokeWidth="1.300" d="M1 7V1h7M14 1h7v6M21 15v6h-7M8 21H1v-6" /></Icon></button>
    <button aria-label="局部三维"><Icon size={22} box={22}><rect x="1" y="1" width="20" height="20" rx="1" strokeDasharray="4 2" /><path stroke={BLUE} strokeWidth="1.200" d="M11 5l5.500 3v6.500L11 17.500l-5.500-3V8zM5.500 8l5.500 3 5.500-3M11 11v6" /></Icon></button>
    <hr />
    <button aria-label="显示设置"><Icon size={22} box={22}><path strokeWidth="1.200" d="M10 20H3a2 2 0 0 1-2-2V1h20v12M5 6h2M9 6h9M5 10h2M9 10h6M5 14h3" /><path stroke={BLUE} d="M11 18c3-4 7-4 10 0-3 4-7 4-10 0z" /><circle cx="16" cy="18" r="1.300" stroke={BLUE} /></Icon></button>
  </ViewBar>
);

/* ---------- display settings ---------- */

const ShowPanel = styled(Panel)`width: 277px; flex: none;`;
const ShowTabs = styled.div`display: flex; align-items: flex-end; gap: 4px; height: 27px; flex: none; padding-left: 1px; border-bottom: 1px solid #c8ccd2;`;
const ShowTab = styled.button<{ $on?: boolean }>`
  padding: 0 6px; border-radius: 3px 3px 0 0;
  ${p => p.$on ? css`height: 24px; margin-bottom: -1px; color: #2b7fe0; background: #fff; border: 1px solid #c8ccd2; border-bottom: 0;`
    : css`height: 21px; background: #dcdcdc; color: #444;`}
`;
const ShowFrame = styled.div`
  display: flex; flex: 1; min-height: 0; overflow: hidden; margin: 2px 2px 0 2px; border: 1px solid ${LINE};
`;
const ShowGridBox = styled.div`width: 255px; flex: none;`;
const ShowFoot = styled.div`display: flex; justify-content: flex-end; align-items: flex-start; height: 38px; flex: none; padding: 6px 8px 0 0;`;
const Reset = styled.button`width: 90px; height: 26px; border: 1px solid #c4c4c4; border-radius: 3px; background: #fff;`;

/* level, name, shown (1 on, 2 partly), label column (3 disabled), last in its branch */
const layers: [number, string, number, number, boolean?][] = [
  [0, "所有构件", 2, 0], [1, "轴线", 1, 3], [2, "轴网", 1, 3], [2, "辅助轴线", 1, 3, true],
  [1, "柱", 1, 0], [2, "柱", 1, 0], [2, "构造柱", 1, 0], [2, "砌体柱", 1, 0], [2, "约束边缘非阴...", 1, 0, true],
  [1, "墙", 2, 0], [2, "剪力墙", 1, 0], [2, "人防门框墙", 1, 0], [2, "砌体墙", 1, 0], [2, "砌体加筋", 0, 0], [2, "保温墙", 1, 0],
  [2, "暗梁", 0, 0], [2, "墙垛", 1, 0], [2, "幕墙", 1, 0, true],
  [1, "门窗洞", 2, 0], [2, "门", 1, 0], [2, "窗", 1, 0], [2, "门联窗", 1, 0], [2, "墙洞", 1, 0], [2, "带形窗", 1, 0],
  [2, "带形洞", 1, 0], [2, "飘窗", 1, 0], [2, "老虎窗", 0, 0], [2, "过梁", 0, 0], [2, "壁龛", 0, 0, true],
  [1, "梁", 2, 0], [2, "梁", 0, 0], [2, "连梁", 1, 0], [2, "圈梁", 0, 0, true], [1, "板", 2, 0], [2, "", 0, 0],
];

const DisplaySettings = () => (
  <ShowPanel>
    <PanelTop />
    <PanelTitle>显示设置</PanelTitle>
    <ShowTabs><ShowTab $on>图元显示</ShowTab><ShowTab>楼层显示</ShowTab></ShowTabs>
    <ShowFrame>
      <ShowGridBox>
        <Grid>
          <colgroup><col /><col style={{ width: 63 }} /><col style={{ width: 63 }} /></colgroup>
          <thead><tr><th>图层构件</th><th>显示图元</th><th>显示名称</th></tr></thead>
          <tbody>
            {layers.map(([lv, name, a, b, end], i) => (
              <tr key={i}>
                <td>
                  <NameCell $pad={lv === 0 ? 1 : 7}>
                    {lv === 1 && <Guide $w={4} $arm />}
                    {lv === 2 && <><Guide $w={10} /><Guide $w={17} $arm $end={end} /></>}
                    {lv < 2 && <Expander $tail aria-label={name} />}
                    <span>{name}</span>
                  </NameCell>
                </td>
                <td><Check state={a} label={`${name} 显示图元`} /></td>
                <td><Check state={b} label={`${name} 显示名称`} /></td>
              </tr>
            ))}
          </tbody>
        </Grid>
      </ShowGridBox>
      <Thumb $top={14} $h={198} />
    </ShowFrame>
    <ShowFoot><Reset>恢复默认设置</Reset></ShowFoot>
  </ShowPanel>
);

/* ---------- dialog ---------- */

const Dialog = styled.section`
  position: absolute; left: 708px; top: 264px; width: 522px; height: 542px;
  display: flex; flex-direction: column; padding: 0 11px; background: #e4e5e4; border: 1px solid #bdbdbd;
`;
const DialogHead = styled.header`
  display: flex; align-items: center; justify-content: space-between; height: 39px; flex: none; padding-bottom: 3px;
  h2 { font-size: 14px; } button { display: flex; padding-right: 1px; }
`;
const DialogTable = styled.div`flex: 1; min-height: 0; background: #fff; border: 1px solid #c2c2c2;`;
const LapGrid = styled(Grid)`
  thead th { height: 17px; background: #f0f0f0; border-color: #c2c2c2; line-height: 16px; white-space: normal; }
  thead ${BlueHead} { background: #82bbfc; border-color: #6aa6e6; }
`;
const LapRow = styled.tr<{ $group?: boolean }>`
  td { background: ${p => (p.$group ? "#fffde4" : "#fff")}; }
`;
const CellSelect = styled.td`
  && { position: relative; border: 2px solid #6aa6e6; }
  select { appearance: none; display: block; width: 100%; height: 17px; padding: 0 4px; border: 0; background: #fff; outline: 0; line-height: 17px; }
  i { position: absolute; right: 10px; top: 7px; }
  &::after { content: ""; position: absolute; right: -4px; bottom: -4px; width: 4px; height: 4px; background: #6aa6e6; }
`;
const DialogFoot = styled.footer`display: flex; justify-content: flex-end; gap: 6px; height: 44px; flex: none; padding-top: 7px;`;
const DialogBtn = styled.button<{ $main?: boolean }>`
  width: 80px; height: 26px; border-radius: 3px;
  ${p => (p.$main ? css`background: #2b7fe0; color: #fff;` : css`background: #fff; border: 1px solid #c8c8c8;`)}
`;
const Grip = styled.span`position: absolute; right: 3px; bottom: 3px;`;

const T = ["绑扎", "绑扎", "8000", "8000"];
const M = ["绑扎", "绑扎", "10000", "10000"];
const L = ["直螺纹连接", "电渣压力焊", "10000", "10000"];
const S = ["套管挤压", "套管挤压", "10000", "10000"];
const laps: [string, string[] | null, boolean?][] = [
  ["HPB235,HPB300", null], ["3~10", T], ["12~14", M], ["16~22", L], ["25~32", S, true],
  ["HRB335,HRB335E,HRBF33...", null], ["3~10", T], ["12~14", M], ["16~22", L], ["25~50", S, true],
  ["HRB400,HRB400E,HRBF40...", null], ["3~10", T], ["12~14", M], ["16~22", L], ["25~50", S, true],
  ["冷轧带肋钢筋", null], ["4~12", T, true], ["冷轧扭钢筋", null], ["6.5~14", T, true],
];

const LapDialog = () => (
  <Dialog role="dialog" aria-label="搭接设置">
    <DialogHead><h2>搭接设置</h2><button aria-label="关闭"><Cross size={13} /></button></DialogHead>
    <DialogTable>
      <LapGrid>
        <colgroup><col style={{ width: 22 }} /><col /><col style={{ width: 71 }} /><col style={{ width: 71 }} /><col style={{ width: 71 }} /><col style={{ width: 71 }} /></colgroup>
        <thead>
          <tr><th rowSpan={2} /><th rowSpan={2}>钢筋直径范围</th><BlueHead colSpan={2}>连接形式</BlueHead><th rowSpan={2}>墙柱垂直筋定尺</th><th rowSpan={2}>其余钢筋定尺</th></tr>
          <tr><BlueHead>墙水平筋</BlueHead><th>墙垂直筋</th></tr>
        </thead>
        <tbody>
          {laps.map(([name, vals, end], i) => (
            <LapRow key={i} $group={!vals}>
              <NumCell $on={i === 1}>{i + 1}</NumCell>
              <td>
                <NameCell $pad={vals ? 8 : 2}>
                  {vals ? <Guide $w={17} $arm $end={end} /> : <Expander $tail aria-label={name} />}
                  <span>{name}</span>
                </NameCell>
              </td>
              {(vals ?? ["", "", "", ""]).map((v, k) => i === 1 && k === 0
                ? <CellSelect key={k}><select aria-label="墙水平筋"><option>{v}</option></select><Caret /></CellSelect>
                : <ValCell key={k}>{v}</ValCell>)}
            </LapRow>
          ))}
        </tbody>
      </LapGrid>
    </DialogTable>
    <DialogFoot><DialogBtn $main>确定</DialogBtn><DialogBtn>取消</DialogBtn></DialogFoot>
    <Grip><Icon size={9} box={9}><path fill="#777" stroke="none" d="M6 0h2v2H6zM3 3h2v2H3zM6 3h2v2H6zM0 6h2v2H0zM3 6h2v2H3zM6 6h2v2H6z" /></Icon></Grip>
  </Dialog>
);

/* ---------- status and task bars ---------- */

const Status = styled.footer`display: flex; align-items: center; height: 31px; flex: none; padding-left: 2px; background: #fcfcfc; white-space: nowrap;`;
const Slot = styled.span<{ $w: number }>`width: ${p => p.$w}px; flex: none;`;
const Snap = styled.button<{ $on?: boolean; $wide?: boolean; $gap?: number }>`
  display: flex; align-items: center; justify-content: center; gap: 6px; height: 25px; width: ${p => (p.$wide ? 36 : 25)}px;
  margin-right: ${p => p.$gap ?? 4}px; border: 1px solid ${p => (p.$on ? "#3b8bea" : "#9a9a9a")}; border-radius: 3px; background: ${p => (p.$on ? "#d8e7fb" : "#fff")};
`;
const Task = styled.div`display: flex; align-items: flex-end; height: 8px; flex: none; overflow: hidden; background: linear-gradient(90deg, #223a44, #21394a 40%, #1a2945);`;
const TaskPart = styled.span<{ $w: number; $h?: number; $bg: string }>`width: ${p => p.$w}px; height: ${p => p.$h ?? 8}px; background: ${p => p.$bg}; flex: none;`;
const Clock = styled.time`align-self: flex-start; margin-right: 4px; color: #fff; line-height: 20px;`;
const Alert = styled.i`align-self: flex-start; width: 6px; height: 6px; margin: 2px 90px 0 -6px; border-radius: 3px; background: #f00;`;

/* ---------- floating items ---------- */

const Bird = styled.div`position: absolute; left: 1804px; top: 106px; height: 42px; overflow: hidden;`;
const Ime = styled.div`
  position: absolute; left: 1722px; top: 147px; width: 194px; height: 23px; display: flex; align-items: center; justify-content: space-between;
  padding: 0 4px 0 20px; background: #fff; border: 1px solid #9ba5b4; color: #1c70c8; font-weight: bold; font-size: 14px;
`;
const ImeLogo = styled.span`position: absolute; left: -15px; top: -5px;`;
const Watermark = styled.div`
  position: absolute; left: 1639px; top: 943px; color: rgba(120, 120, 120, 0.6); pointer-events: none; white-space: nowrap;
  p:first-child { font-size: 20px; line-height: 26px; }
  p:last-child { font-size: 15px; line-height: 22px; }
`;

const ribbon: [string, [string, string][]][] = [
  ["基本设置", [["info", "工程信息"], ["floor", "楼层设置"]]],
  ["土建设置", [["calc", "计算设置"], ["rule", "计算规则"]]],
  ["钢筋设置", [["calc", "计算设置"], ["weight", "比重设置"], ["hook", "弯钩设置"], ["bend", "弯曲调整值设置"], ["loss", "损耗设置"]]],
];
const quick: [string, number, boolean?][] = [
  ["up", 26], ["new", 26], ["open", 26], ["save", 26], ["undo", 35, true], ["redo", 35, true], ["sum", 26], ["view", 26],
  ["grid", 26], ["comp", 26], ["edit", 26], ["film", 26], ["page", 26],
];

const Combo = ({ v, w, label }: { v: string; w: number; label: string }) => (
  <SelectBox $w={w}><select aria-label={label}><option>{v}</option></select><Caret /></SelectBox>
);
const SpinBox = ({ id }: { id: string }) => (
  <Spin><OptInput id={id} $w={62} $dim defaultValue="0" /><span><Caret $dir="up" /><Caret /></span></Spin>
);

export default function App() {
  return (
    <Desktop>
      <GlobalStyle />
      <Work>
        <Behind>
          <BehindPart $h={23} $bg="#fff" />
          <BehindPart $h={54} $bg="#eeebe8" />
          <BehindPart $h={25} $bg="#f0f0f0" />
          <BehindPart $h={14} $bg="#e8e4d4" $edge />
          <BehindPart $h={76} $bg="#ffffdd" $edge />
          <BehindPart $bg="repeating-linear-gradient(#000 0 21px, #777 21px 22px, #000 22px 73px)" $edge />
          <BehindPart $h={20} $bg="#f0f0f0" $edge />
          <BehindPart $h={23} $bg="#e6e1dc" />
        </Behind>
        <AppWindow>
          <Header>
            <LogoBox>
              <svg width="32" height="32" viewBox="0 0 32 32" aria-hidden="true">
                <defs><linearGradient id="logo" x1="0" y1="0" x2="1" y2="1"><stop offset="0" stopColor="#23c4f8" /><stop offset=".5" stopColor="#1496f4" /><stop offset="1" stopColor="#0a62e0" /></linearGradient></defs>
                <path fill="url(#logo)" d="M1 4C1 1 4 1 8 1h20c3 0 3 1 2 4-1 3-4 4-8 4-2 0-3 1-3 4 0 4 0 8-1 12-1 4-8 4-8 0 0-3 1-7 2-10 1-4 0-5-3-5-5 0-8-2-8-6z" />
              </svg>
              <Icon size={5} box={5}><path fill="#555" stroke="none" d="M5 0v5H0z" /></Icon>
            </LogoBox>
            <HeadRows>
              <TitleRow>
                <QuickBar>
                  {quick.map(([n, w, drop]) => <QuickBtn key={n} $w={w} aria-label={n}>{quickIcons[n]}{drop && <Caret />}</QuickBtn>)}
                  <QuickBtn $w={20} aria-label="自定义快速访问栏"><Icon size={10} box={10}><path d="M2 3h6" /><path fill={INK} stroke="none" d="M2 5h6l-3 4z" /></Icon></QuickBtn>
                </QuickBar>
                <Title>广联达BIM土建计量平台 GTJ2021 - [E:\小尹的工作文件\工作专用\新城睿园二期\新城睿园二期17#\新城睿园二期17#.GTJ]</Title>
                <WinButtons>
                  <button aria-label="最小化"><Icon size={10} box={10}><path strokeWidth="2" d="M2 8h6" /></Icon></button>
                  <button aria-label="还原"><Icon size={10} box={10}><path d="M1 4h6v5H1zM3 4V1h6v5H7" /></Icon></button>
                  <button aria-label="关闭"><Icon size={10} box={10}><path strokeWidth="1.300" d="M1 1l8 8M9 1L1 9" /></Icon></button>
                </WinButtons>
              </TitleRow>
              <TabRow>
                <Tabs>
                  {["开始", "工程设置", "建模", "工程量", "视图", "工具", "云应用", "协同建模(限免)", "IGMS"].map(t => <Tab key={t} $on={t === "工程设置"}>{t}</Tab>)}
                </Tabs>
                <HelpSearch><input aria-label="搜索帮助" defaultValue="楼层三维显示图元/轴网有错位，位置不对应如何处理?" /><Search /></HelpSearch>
                <User><svg width="16" height="16" viewBox="0 0 16 16"><rect width="16" height="16" fill="#a9d2f7" /><path fill="#fff" d="M8 1c3 0 4 2 3.500 5S10 9 10 10c2 1 5 1 5 6H1c0-5 3-5 5-6 0-1-1-1-1.500-4S5 1 8 1z" /></svg>尹世杰</User>
                <Tools>
                  <button aria-label="消息"><Icon><path d="M10 2C5 1 1 4 1 7.500c0 2 1 3.500 3 4.500v3l3-2c4 0 8-2 8-5.500M4 8h1.500M7 8h1.500M10 8h1.500" /><circle cx="13" cy="3" r="2.300" stroke={BLUE} /></Icon></button>
                  <button aria-label="帮助"><Icon size={10} box={12}><path strokeWidth="1.500" d="M3 4c0-4 6-4 6 0 0 2-3 2-3 4.500M6 10v1.500" /></Icon><Caret /></button>
                  <button aria-label="皮肤"><Icon><path d="M5 2L1 4v4h3v7h8V8h3V4l-4-2c-1 2-5 2-6 0z" /></Icon></button>
                  <button aria-label="收起"><Icon><path strokeWidth="1.300" d="M1 11l7-6 7 6" /></Icon></button>
                </Tools>
              </TabRow>
            </HeadRows>
          </Header>
          <Ribbon>
            {ribbon.map(([g, items]) => (
              <Group key={g}>
                <GroupItems>{items.map(([ic, t]) => <Big key={t}>{ribbonIcons[ic]}{t}</Big>)}</GroupItems>
                <h2>{g}</h2>
              </Group>
            ))}
          </Ribbon>
          <OptionBar>
            <Combo v="首层" w={99} label="楼层" /><Combo v="墙" w={99} label="构件类别" /><Combo v="剪力墙" w={99} label="构件类型" /><Combo v="JLQ-1" w={99} label="构件" />
            <span><Check id="extra" size={13} /></span>
            <OptLabel htmlFor="extra">点加长度</OptLabel>
            <OptLabel htmlFor="len" $dim>长度:</OptLabel><OptInput id="len" $w={79} defaultValue="0" />
            <OptLabel htmlFor="rlen" $dim>反向长度:</OptLabel><OptInput id="rlen" $w={79} defaultValue="0" />
            <Divider />
            <OptLabel htmlFor="off">左偏心距离:</OptLabel><OptInput id="off" $w={79} defaultValue="100" />
            <Divider /><OptLabel as="span" $gap={1} />
            <Combo v="不偏移" w={58} label="偏移" />
            <OptLabel htmlFor="ox" $dim $gap={0}>X=</OptLabel><SpinBox id="ox" /><OptLabel as="span" $dim $gap={0}>mm</OptLabel>
            <OptLabel htmlFor="oy" $dim>Y=</OptLabel><SpinBox id="oy" /><OptLabel as="span" $dim $gap={0}>mm</OptLabel>
          </OptionBar>
          <Body>
            <Navigator />
            <Components />
            <Splitter $w={4} />
            <Viewport><Drawing /><ViewTools /></Viewport>
            <Splitter $w={5} />
            <DisplaySettings />
          </Body>
          <Status>
            <Slot $w={262}>X = -26814 Y = 6041</Slot>
            <Slot $w={41}>层高：</Slot><Slot $w={43}>2.95</Slot>
            <Slot $w={41}>标高：</Slot><Slot $w={92}>-0.08~2.87</Slot><Slot $w={103}>0</Slot>
            <Slot $w={103}>隐藏：0</Slot>
            <Snap aria-label="正交"><Icon><path d="M2 2v12h13M2 9h4v5" /></Icon></Snap>
            <Snap $on $wide $gap={5} aria-label="对象捕捉"><Icon><rect x="3" y="2" width="11" height="12" rx="1" /><circle cx="3" cy="2.500" r="1.800" stroke={BLUE} fill="#fff" /></Icon><Caret /></Snap>
            <Snap $gap={5} aria-label="交点"><Icon><path d="M1 1l14 14M15 1L1 15" /><circle cx="8" cy="8" r="1.500" stroke={BLUE} fill="#fff" /></Icon></Snap>
            <Snap $wide $gap={3} aria-label="角度"><Icon><path d="M1 14h14" stroke="#999" /><path d="M1 13L11 2M5 9l3 4" /></Icon><Caret /></Snap>
            <Snap $wide $gap={3} aria-label="点偏移"><Icon><path d="M1 5h6M4 2v6" /><path fill={INK} d="M6 10h9v4H6z" /></Icon><Caret /></Snap>
            <Snap $on $gap={3} aria-label="选择"><Icon><path fill={BLUE} stroke={BLUE} d="M3 3h8v8H3z" /><path stroke={BLUE} d="M1 1h12v7M1 1v12h8" /><path fill={BLUE} stroke="none" d="M10 8l5 5-2 .5 1 2-1.500.500-1-2-1.500 1z" /></Icon></Snap>
            <Snap $gap={6} aria-label="折线"><Icon><path stroke="#888" d="M2 14C2 8 3 5 5 4l9-2" /><circle cx="2" cy="13.500" r="1.200" /><circle cx="5" cy="4" r="1.200" /><path fill={INK} stroke="none" d="M9 7l5 5-2 .500-1 2.500z" /></Icon></Snap>
            在此设置墙的搭接形式及定尺长度
          </Status>
        </AppWindow>
      </Work>
      <Task>
        <TaskPart $w={104} $bg="transparent" /><TaskPart $w={164} $h={5} $bg="#ededed" /><TaskPart $w={56} $h={5} $bg="#1e8bff" />
        <TaskPart $w={250} $bg="transparent" /><TaskPart $w={48} $bg="#4e626c" /><TaskPart $w={50} $bg="transparent" /><TaskPart $w={48} $bg="#a8642c" />
        <Spacer /><Clock>15:54 周四</Clock><Alert />
      </Task>

      <LapDialog />
      <Bird>
        <svg width="52" height="58" viewBox="0 0 52 58" aria-hidden="true">
          <path fill="#3f83f8" stroke="#6ba3fb" strokeWidth="2" d="M22 3q4-3 8 0l17 10q4 2 4 6v22q0 4-4 6L30 56q-4 3-8 0L5 47q-4-2-4-6V19q0-4 4-6z" />
          <path fill="#f3f7ff" d="M7 17l14 4q3 0 4 3 6-10 17-14-4 7-4 14l-2 5q4 2 7 5l-10 1q-3 7-10 8-8-5-7-17-2-5-9-9z" />
        </svg>
      </Bird>
      <Ime>
        <ImeLogo><svg width="30" height="28" viewBox="0 0 30 28" aria-hidden="true"><path fill="#f4501e" d="M4 3L23 0q3 0 3 3l3 20q0 3-3 3L8 28q-3 0-4-3L1 6q0-3 3-3z" /><path fill="none" stroke="#fff" strokeWidth="4" d="M23 7q-13-3-14 2c0 4 13 3 13 8 0 5-8 5-14 3" /></svg></ImeLogo>
        <span>中</span>
        <Icon><circle cx="4" cy="5" r="2" stroke="#1c70c8" /><path stroke="#1c70c8" strokeWidth="3" d="M11 8v3l-2 3" /></Icon>
        <Icon><g stroke="#1c70c8" strokeWidth="1.800"><circle cx="8" cy="8" r="6.800" /><path d="M4.500 9q3.500 5 7 0M6 5v2M10 5v2" /></g></Icon>
        <Icon><rect x="5.500" y="1" width="5" height="9" rx="2.500" fill="#1c70c8" stroke="none" /><path stroke="#1c70c8" strokeWidth="1.500" d="M3 7q0 5 5 5t5-5M8 12v3M5 15h6" /></Icon>
        <Icon><rect x="1" y="3" width="14" height="10" rx="1" stroke="#1c70c8" strokeWidth="1.600" /><path stroke="#1c70c8" strokeWidth="1.500" strokeDasharray="2 1" d="M3 6h10M3 8.500h10M4 11h8" /></Icon>
        <Icon><g fill="#b9c3d4" stroke="none"><circle cx="6" cy="4" r="3" /><path d="M0 13q0-6 6-6t6 6z" /><rect x="8" y="8" width="8" height="7" fill="#8d9bb5" /></g></Icon>
        <Icon><path fill="#1c70c8" stroke="none" d="M5 1L0 4l2 4 2-1v8h8V7l2 1 2-4-5-3c-1 2-5 2-6 0z" /></Icon>
        <Icon><path fill="#1c70c8" stroke="none" d="M1 1h6v6H1zM1 9h6v6H1zM9 9h6v6H9z" /><path stroke="#1c70c8" strokeWidth="1.500" d="M10 2h4.500v4.500H10z" /></Icon>
      </Ime>
      <Watermark><p>激活 Windows</p><p>转到“设置”以激活 Windows。</p></Watermark>
    </Desktop>
  );
}
